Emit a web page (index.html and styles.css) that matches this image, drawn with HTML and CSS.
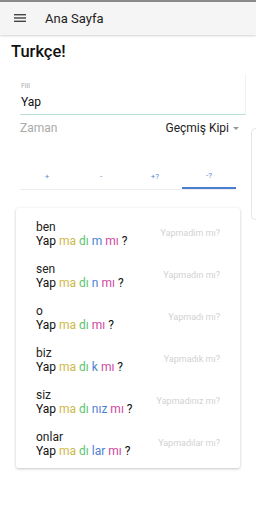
FILE: index.html
```html
<!DOCTYPE html>
<html lang="tr">
<head>
  <meta charset="UTF-8">
  <meta name="viewport" content="width=device-width, initial-scale=1.0">
  <title>Ana Sayfa</title>
  <link rel="stylesheet" href="styles.css">
</head>
<body>
  <div class="status-strip"></div>
  <header class="toolbar">
    <svg class="menu-icon" viewBox="0 0 12 8" width="12" height="8">
      <rect x="0" y="0" width="12" height="1.4" fill="#444"></rect>
      <rect x="0" y="3.3" width="12" height="1.4" fill="#444"></rect>
      <rect x="0" y="6.6" width="12" height="1.4" fill="#444"></rect>
    </svg>
    <span class="toolbar-title">Ana Sayfa</span>
  </header>

  <main class="page">
    <h1 class="page-title">Turkçe!</h1>

    <div class="field">
      <label class="field-label">Fiil</label>
      <div class="field-value">Yap</div>
    </div>

    <div class="select-row">
      <span class="select-label">Zaman</span>
      <span class="select-value">Geçmiş Kipi <span class="caret"></span></span>
    </div>

    <nav class="tabs">
      <div class="tab">+</div>
      <div class="tab">-</div>
      <div class="tab">+?</div>
      <div class="tab active">-?</div>
    </nav>

    <section class="card">
      <div class="row">
        <div class="conj">
          <div class="pronoun">ben</div>
          <div>Yap <span class="neg">ma</span> <span class="past">dı</span> <span class="pers">m</span> <span class="q">mı</span> ?</div>
        </div>
        <div class="hint">Yapmadim mı?</div>
      </div>
      <div class="row">
        <div class="conj">
          <div class="pronoun">sen</div>
          <div>Yap <span class="neg">ma</span> <span class="past">dı</span> <span class="pers">n</span> <span class="q">mı</span> ?</div>
        </div>
        <div class="hint">Yapmadın mı?</div>
      </div>
      <div class="row">
        <div class="conj">
          <div class="pronoun">o</div>
          <div>Yap <span class="neg">ma</span> <span class="past">dı</span> <span class="q">mı</span> ?</div>
        </div>
        <div class="hint">Yapmadı mı?</div>
      </div>
      <div class="row">
        <div class="conj">
          <div class="pronoun">biz</div>
          <div>Yap <span class="neg">ma</span> <span class="past">dı</span> <span class="pers">k</span> <span class="q">mı</span> ?</div>
        </div>
        <div class="hint">Yapmadık mı?</div>
      </div>
      <div class="row">
        <div class="conj">
          <div class="pronoun">siz</div>
          <div>Yap <span class="neg">ma</span> <span class="past">dı</span> <span class="pers">nız</span> <span class="q">mı</span> ?</div>
        </div>
        <div class="hint">Yapmadınız mı?</div>
      </div>
      <div class="row">
        <div class="conj">
          <div class="pronoun">onlar</div>
          <div>Yap <span class="neg">ma</span> <span class="past">dı</span> <span class="pers">lar</span> <span class="q">mı</span> ?</div>
        </div>
        <div class="hint">Yapmadılar mı?</div>
      </div>
    </section>
  </main>

  <!-- edge of the next card peeking in from the right -->
  <div class="side-peek"></div>
</body>
</html>
```

FILE: styles.css
```css
body {
  margin: 0;
  font-family: Roboto, "Noto Sans", sans-serif;
  color: #212121;
  background: #fff;
  width: 256px;
  height: 512px;
  overflow: hidden;
  position: relative;
}

.status-strip {
  height: 2px;
  background: #8a8a8a;
}

.toolbar {
  display: flex;
  align-items: center;
  height: 33px;
  padding-left: 14px;
  background: #f5f5f5;
  box-shadow: 0 1px 2px rgba(0, 0, 0, 0.18);
  position: relative;
}

.menu-icon {
  display: block;
  margin-top: -1px;
}

.toolbar-title {
  margin-left: 19px;
  font-size: 13px;
  color: #222;
}

.page {
  display: flex;
  flex-direction: column;
  padding: 0 10px 0 20px;
}

.page-title {
  margin: 6px 0 0 -9px;
  font-size: 16.5px;
  font-weight: 500;
  line-height: 22px;
  color: #111;
}

.field {
  display: flex;
  flex-direction: column;
  margin-top: 11px;
  padding: 8px 0 4px 1px;
  border-bottom: 1px solid #b8e0d6;
  border-right: 1px solid #f2f2f2;
}

.field-label {
  font-size: 7px;
  line-height: 9px;
  color: #aaa;
}

.field-value {
  margin-top: 3px;
  font-size: 12px;
  line-height: 16px;
  color: #111;
}

.select-row {
  display: flex;
  justify-content: space-between;
  align-items: center;
  height: 26px;
  padding-right: 7px;
  font-size: 12px;
}

.select-label {
  color: #aaa;
}

.select-value {
  display: flex;
  align-items: center;
  color: #222;
}

.caret {
  margin-left: 4px;
  width: 0;
  height: 0;
  border-left: 3px solid transparent;
  border-right: 3px solid transparent;
  border-top: 3px solid #999;
}

.tabs {
  display: flex;
  margin-top: 22px;
  margin-right: 10px;
  border-bottom: 1px solid #ececec;
}

.tab {
  flex: 1;
  height: 26px;
  display: flex;
  align-items: center;
  justify-content: center;
  font-size: 8px;
  color: #5b87d6;
  box-sizing: border-box;
}

.tab.active {
  border-bottom: 2px solid #4a7fd0;
  margin-bottom: -1px;
}

.card {
  display: flex;
  flex-direction: column;
  gap: 14px;
  margin: 18px 6px 0 -4px;
  padding: 12px 20px 10px 20px;
  background: #fff;
  border-radius: 2px;
  box-shadow: 0 1px 3px rgba(0, 0, 0, 0.22), 0 0 1px rgba(0, 0, 0, 0.08);
}

.row {
  display: flex;
  justify-content: space-between;
  align-items: center;
  height: 28px;
}

.conj {
  font-size: 12px;
  line-height: 14px;
  color: #111;
}

.pronoun {
  color: #222;
}

.neg {
  color: #cdb949;
}

.past {
  color: #5ec46c;
}

.pers {
  color: #4f7fd4;
}

.q {
  color: #d0479f;
}

.hint {
  font-size: 9px;
  color: #d2d2d2;
  margin-bottom: 3px;
}

.side-peek {
  position: absolute;
  left: 251px;
  top: 128px;
  width: 4px;
  height: 90px;
  border: 1px solid #e6e6e6;
  border-right: 0;
  border-radius: 5px 0 0 5px;
}
```
